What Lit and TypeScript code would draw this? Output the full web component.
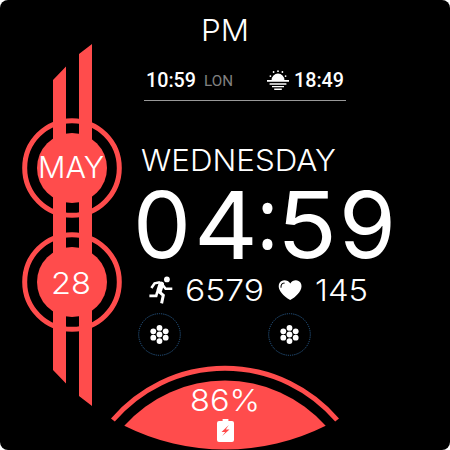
import { LitElement, html, css, svg } from "lit";
import { customElement, property } from "lit/decorators.js";

// A line of text whose box is exactly its cap height, stretched to a set width.
@customElement("fit-text")
class FitText extends LitElement {
  @property() text = "";
  @property({ type: Number }) w = 50;
  @property({ type: Number }) cap = 22;
  @property({ type: Number }) size = 30.3;
  static styles = css`
    :host { display: block; }
    svg { display: block; overflow: visible; }
    text { fill: currentColor; white-space: pre; }
  `;
  render() {
    return html`<svg width=${this.w} height=${this.cap}>
      <text x="0" y=${this.cap} font-size=${this.size} textLength=${this.w} lengthAdjust="spacingAndGlyphs">${this.text}</text>
    </svg>`;
  }
}

@customElement("app-root")
class AppRoot extends LitElement {
  static styles = css`
    :host { display: block; width: 450px; height: 450px; background: #fff; }
    .face {
      position: relative; box-sizing: border-box; width: 450px; height: 450px; overflow: hidden;
      border-radius: 8px; background: #000; color: #fff;
      display: grid; grid-template-columns: 136px 1fr; grid-template-rows: 41px 324px 85px;
      font-family: Inter, "Liberation Sans", sans-serif; font-weight: 300;
    }
    .art { position: absolute; inset: 0; }
    header { grid-column: 1 / 3; display: flex; justify-content: center; padding-top: 19px; z-index: 1; }
    .rail { display: flex; flex-direction: column; align-items: center; gap: 94px; padding: 115px 0 0 8px; width: 126px; z-index: 1; }
    main { z-index: 1; }
    .zones {
      box-sizing: border-box; width: 202px; height: 60px; margin-left: 8px; padding-top: 32px; border-bottom: 1px solid #999;
      display: flex; align-items: flex-start; font-family: Roboto, sans-serif; font-weight: 500;
    }
    .t1 { margin-left: 2px; }
    .lon { margin: 2px 0 0 8px; color: #808080; font-weight: 400; }
    .sun { margin: -3px 5px 0 34px; }
    .day { margin: 48px 0 0 5px; }
    .clock { display: flex; height: 69px; margin: 19px 0 0 -3px; font-weight: 400; }
    .four { margin-left: 3px; }
    .colon { font-family: Roboto, sans-serif; font-weight: 500; }
    .nine { margin-left: 2px; }
    .stats { display: flex; margin-top: 17px; align-items: center; height: 28px; }
    .run { margin: 0 12px 0 13px; }
    .heart { margin: 0 13px 0 14px; }
    .apps { display: flex; gap: 87px; margin: 9px 0 0 2px; }
    footer { grid-column: 1 / 3; display: flex; flex-direction: column; align-items: center; gap: 8px; padding-top: 24px; z-index: 1; }
    svg { display: block; flex: none; }
  `;

  private cluster() {
    const dots = [[0, -6.6], [0, 0], [0, 6.6], [-6.2, -3.2], [-6.2, 3.2], [6.2, -3.2], [6.2, 3.2]];
    return html`<svg width="43" height="43" viewBox="-21.5 -21.5 43 43">
      <circle r="20.8" fill="none" stroke="#2c6499" stroke-width="0.9" stroke-dasharray="1.2 1" />
      ${dots.map(([x, y]) => svg`<circle cx=${x} cy=${y} r="2.9" fill="#fff" />`)}
    </svg>`;
  }

  render() {
    return html`<div class="face">
      <svg class="art" width="450" height="450" fill="#ff4c4c">
        <g fill="none" stroke="#ff4c4c" stroke-width="5">
          <circle cx="72" cy="168" r="47.3" />
          <circle cx="72" cy="282" r="47.3" />
          <path d="M112.9 420A147.3 147.3 0 0 1 337.1 420" />
        </g>
        <circle cx="72" cy="168" r="35" />
        <circle cx="72" cy="282" r="35" />
        <path d="M53 80L66 66.5V383.5L53 370ZM79 54L92 44V406L79 396Z" />
        <path d="M124.3 425.7A135 135 0 0 1 325.7 425.7A225 225 0 0 1 124.3 425.7Z" />
      </svg>

      <header><fit-text text="PM" w="48" cap="22"></fit-text></header>

      <section class="rail">
        <fit-text text="MAY" w="66"></fit-text>
        <fit-text text="28" w="40"></fit-text>
      </section>

      <main>
        <div class="zones">
          <fit-text class="t1" text="10:59" w="50" cap="14" size="20"></fit-text>
          <fit-text class="lon" text="LON" w="29" cap="11" size="15"></fit-text>
          <svg class="sun" width="22" height="20" fill="#fff">
            <path d="M0 10H4.6A6.4 6.4 0 0 1 17.4 10H22V11.7H0ZM2.6 13.2H19.4V14.7H2.6ZM5 15.9H17V17.3H5ZM7.2 18.4H14.8V20H7.2Z" />
            <circle cx="11" cy="1.2" r=".9" /><circle cx="6.6" cy="2" r=".9" /><circle cx="15.4" cy="2" r=".9" />
            <circle cx="3.4" cy="6.1" r=".9" /><circle cx="18.6" cy="6.1" r=".9" />
          </svg>
          <fit-text text="18:49" w="50" cap="14" size="20"></fit-text>
        </div>
        <fit-text class="day" text="WEDNESDAY" w="195"></fit-text>
        <div class="clock">
          <fit-text text="0" w="58" cap="68" size="92.5"></fit-text>
          <fit-text class="four" text="4" w="64" cap="69" size="94"></fit-text>
          <fit-text class="colon" text=":" w="19" cap="59" size="88"></fit-text>
          <fit-text text="5" w="60" cap="68" size="92.5"></fit-text>
          <fit-text class="nine" text="9" w="57" cap="68" size="92.5"></fit-text>
        </div>
        <div class="stats">
          <svg class="run" width="24" height="28" viewBox="0 0 24 28">
            <circle cx="17.9" cy="3.4" r="2.9" fill="#fff" />
            <g fill="none" stroke="#fff">
              <path d="M2.4 12L5.6 7.3L11 6.2" stroke-width="2.6" />
              <path d="M13.2 8.4L16.6 12.7H23.3" stroke-width="2.5" />
              <path d="M12.2 8.4L10.2 14.6" stroke-width="5.6" stroke-linecap="round" stroke-linejoin="round" />
              <path d="M10 15.6L14.3 19.4L12.6 27.4" stroke-width="3" />
              <path d="M8.4 15.5L7.2 19.8H.4" stroke-width="2.7" />
            </g>
          </svg>
          <fit-text text="6579" w="79"></fit-text>
          <svg class="heart" width="24" height="20">
            <path d="M12.3 3.6C14.6-.6 20.4-.8 22.6 2.8C24.7 6.5 22.9 10.7 19.8 14C17.6 16.5 15 18.6 12.2 20C8.6 18.2 5.7 15.8 3.6 13C.8 9.5-.1 6 1.5 3C3.8-.8 9.8-.6 12.3 3.6Z" fill="#fff" />
            <path d="M3 7.2C2.9 4.8 4 3.3 6.2 3" fill="none" stroke="#000" stroke-width="1.1" stroke-linecap="round" />
          </svg>
          <fit-text text="145" w="53"></fit-text>
        </div>
        <div class="apps">${this.cluster()}${this.cluster()}</div>
      </main>

      <footer>
        <fit-text text="86%" w="70"></fit-text>
        <svg width="17" height="23">
          <path d="M5.6 2V0H11.4V2H15Q17 2 17 4V21Q17 23 15 23H2Q0 23 0 21V4Q0 2 2 2Z" fill="#fff" />
          <path d="M11.8 6L4.5 13L8.2 13.1L5.2 17L12.5 10.5L8.8 10.4Z" fill="#ff4c4c" />
        </svg>
      </footer>
    </div>`;
  }
}
